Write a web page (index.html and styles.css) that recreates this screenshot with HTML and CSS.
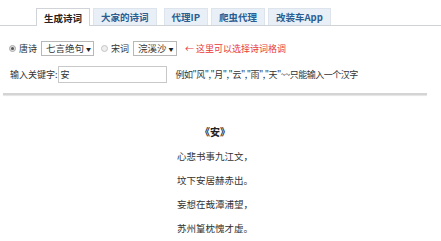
FILE: index.html
```html
<!DOCTYPE html>
<html lang="zh">
<head>
<meta charset="utf-8">
<title>生成诗词</title>
<link rel="stylesheet" href="styles.css">
</head>
<body>
<nav class="tabs">
  <a class="tab active">生成诗词</a>
  <a class="tab">大家的诗词</a>
  <a class="tab">代理IP</a>
  <a class="tab">爬虫代理</a>
  <a class="tab">改装车App</a>
</nav>
<form class="form">
  <div class="row row-type">
    <label class="opt"><span class="radio checked"></span>唐诗</label>
    <span class="select sel1">七言绝句<span class="arrow">▼</span></span>
    <label class="opt opt2"><span class="radio"></span>宋词</label>
    <span class="select sel2">浣溪沙<span class="arrow">▼</span></span>
    <span class="tip">← 这里可以选择诗词格调</span>
  </div>
  <div class="row row-key">
    <label class="key-label">输入关键字:</label>
    <span class="input">安</span>
    <span class="hint">例如"风","月","云","雨","天"~~只能输入一个汉字</span>
  </div>
</form>
<hr class="divider">
<section class="poem">
  <h1 class="title">《安》</h1>
  <p class="line">心悲书事九江文，</p>
  <p class="line">坟下安居赫赤出。</p>
  <p class="line">妄想在哉潭浦望，</p>
  <p class="line">苏州篁枕愧才虚。</p>
</section>
</body>
</html>
```
FILE: styles.css
```css
* { box-sizing: border-box; }
body {
  margin: 0;
  font-family: "Noto Sans CJK SC", "Liberation Sans", sans-serif;
  font-size: 9px;
  color: #333;
  background: #fff;
}
.tabs {
  display: flex;
  gap: 3px;
  padding: 8px 0 0 36px;
  border-bottom: 1px solid #d0d4d8;
  height: 26px;
}
.tab {
  display: flex;
  align-items: center;
  height: 17px;
  padding: 0 7px;
  font-weight: bold;
  font-size: 9.5px;
  color: #2b5d91;
  background: #e9eff6;
  border: 1px solid #dde4ec;
  border-bottom: none;
  white-space: nowrap;
}
.tab.active {
  color: #222;
  background: #fff;
  border-color: #d0d4d8;
  height: 18px;
}
.tabs .tab:nth-child(3) { margin-left: 4px; }
.form { padding-top: 14px; }
.row {
  display: flex;
  align-items: center;
  white-space: nowrap;
}
.row-type { padding-left: 9px; height: 16px; }
.opt { display: flex; align-items: center; }
.opt2 { margin-left: 7px; }
.radio {
  width: 7px;
  height: 7px;
  border-radius: 50%;
  border: 1px solid #c4c4c4;
  background: #eee;
  margin-right: 3px;
  position: relative;
}
.radio.checked { background: #ddd; border-color: #aaa; }
.radio.checked::after {
  content: "";
  position: absolute;
  left: 1px; top: 1px;
  width: 3px; height: 3px;
  border-radius: 50%;
  background: #555;
}
.select {
  display: flex;
  align-items: center;
  justify-content: space-between;
  flex-shrink: 0;
  height: 15px;
  padding: 0 3px 0 4px;
  border: 1px solid #b8b8b8;
  margin-left: 4px;
  font-size: 9.5px;
  white-space: nowrap;
}
.sel1 { width: 53px; }
.sel2 { width: 44px; }
.arrow { font-size: 5px; color: #222; margin-left: 2px; }
.tip { color: #e83a3a; margin-left: 8px; }
.row-key { padding-left: 10px; margin-top: 10px; height: 17px; }
.input {
  display: flex;
  align-items: center;
  flex-shrink: 0;
  width: 109px;
  height: 17px;
  border: 1px solid #c8c8c8;
  padding-left: 2px;
}
.hint { margin-left: 9px; letter-spacing: -0.5px; }
.divider {
  margin: 10px 14px 0 3px;
  border: none;
  height: 2px;
  background: #d4d4d4;
  box-shadow: 0 1px 1px #e4e4e4;
}
.poem {
  margin: 0 14px 0 3px;
  text-align: center;
  padding-top: 25px;
}
.title {
  margin: 0;
  font-size: 10px;
  font-weight: bold;
  color: #222;
  line-height: 24px;
}
.line {
  margin: 0;
  line-height: 24px;
  font-size: 9.5px;
}
```
